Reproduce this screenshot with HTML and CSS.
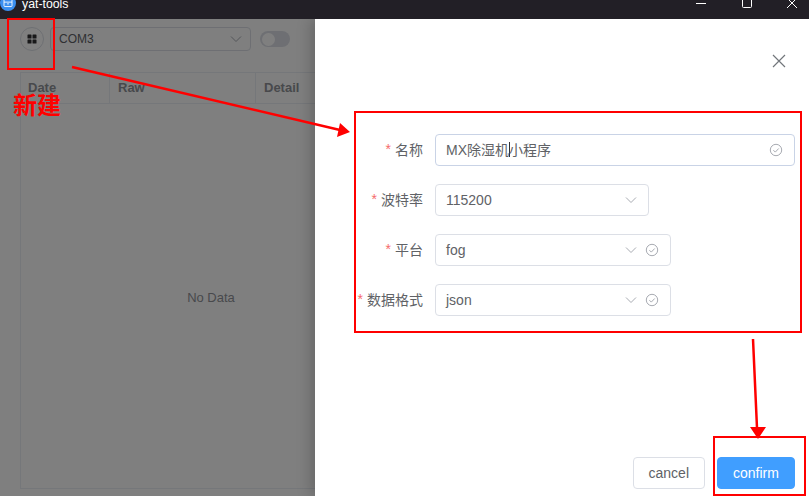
FILE: index.html
```html
<!DOCTYPE html>
<html lang="en">
<head>
    <meta charset="UTF-8">
    <meta name="viewport" content="width=device-width, initial-scale=1.0">
    <title>yat-tools</title>
    <link rel="stylesheet" href="styles.css">
</head>
<body>
    <!-- Title bar -->
    <header class="titlebar">
        <svg class="app-logo" width="16" height="16" viewBox="0 0 18 18">
            <circle cx="9" cy="9" r="9" fill="#3b8ff0"/>
            <rect x="4.5" y="4" width="9" height="9" rx="1" fill="none" stroke="#fff"/>
            <path d="M4.5 8h9M8 10h2" stroke="#fff"/>
        </svg>
        <span class="app-title">yat-tools</span>
        <div class="window-controls">
            <svg width="12" height="12" viewBox="0 0 12 12"><path d="M1 6.5h10" stroke="#fff"/></svg>
            <svg width="12" height="12" viewBox="0 0 12 12"><rect x="1.5" y="1.5" width="9" height="9" rx="1" fill="none" stroke="#fff"/></svg>
            <svg width="12" height="12" viewBox="0 0 12 12"><path d="M1 1l10 10M11 1L1 11" stroke="#fff"/></svg>
        </div>
    </header>

    <div class="workspace">
        <!-- App content behind the drawer -->
        <main class="app">
            <div class="toolbar">
                <button class="icon-button">
                    <svg width="10" height="10" viewBox="0 0 10 10" fill="#303133">
                        <rect x="0.5" y="0.5" width="4" height="4" rx="0.6"/>
                        <rect x="5.5" y="0.5" width="4" height="4" rx="0.6"/>
                        <rect x="0.5" y="5.5" width="4" height="4" rx="0.6"/>
                        <rect x="5.5" y="5.5" width="4" height="4" rx="0.6"/>
                    </svg>
                </button>
                <div class="port-select">
                    <span>COM3</span>
                    <svg class="chevron" width="12" height="12" viewBox="0 0 12 12"><path d="M1 3.5l5 5 5-5" fill="none" stroke="#a8abb2"/></svg>
                </div>
                <div class="switch"><span class="switch-knob"></span></div>
            </div>
            <div class="data-table">
                <div class="table-head">
                    <div>Date</div>
                    <div>Raw</div>
                    <div>Detail</div>
                </div>
                <div class="table-empty">No Data</div>
            </div>
        </main>

        <div class="mask"></div>

        <!-- New item drawer -->
        <aside class="drawer">
            <div class="drawer-header">
                <svg width="14" height="14" viewBox="0 0 14 14"><path d="M1 1l12 12M13 1L1 13" stroke="#72767b" stroke-width="1.2"/></svg>
            </div>
            <form class="form">
                <div class="form-row">
                    <label class="form-label">名称</label>
                    <div class="field field-full field-active">
                        <span class="field-value field-value-cjk">MX除湿机<i class="caret"></i>小程序</span>
                        <svg class="check" width="14" height="14" viewBox="0 0 14 14"><circle cx="7" cy="7" r="5.7" fill="none" stroke="#a8abb2"/><path d="M4.4 7.2l1.9 1.9 3.4-3.6" fill="none" stroke="#a8abb2"/></svg>
                    </div>
                </div>
                <div class="form-row">
                    <label class="form-label">波特率</label>
                    <div class="field field-short">
                        <span class="field-value">115200</span>
                        <svg class="chevron" width="12" height="12" viewBox="0 0 12 12"><path d="M1 3.5l5 5 5-5" fill="none" stroke="#a8abb2"/></svg>
                    </div>
                </div>
                <div class="form-row">
                    <label class="form-label">平台</label>
                    <div class="field field-mid">
                        <span class="field-value">fog</span>
                        <svg class="chevron" width="12" height="12" viewBox="0 0 12 12"><path d="M1 3.5l5 5 5-5" fill="none" stroke="#a8abb2"/></svg>
                        <svg class="check" width="14" height="14" viewBox="0 0 14 14"><circle cx="7" cy="7" r="5.7" fill="none" stroke="#a8abb2"/><path d="M4.4 7.2l1.9 1.9 3.4-3.6" fill="none" stroke="#a8abb2"/></svg>
                    </div>
                </div>
                <div class="form-row">
                    <label class="form-label">数据格式</label>
                    <div class="field field-mid">
                        <span class="field-value">json</span>
                        <svg class="chevron" width="12" height="12" viewBox="0 0 12 12"><path d="M1 3.5l5 5 5-5" fill="none" stroke="#a8abb2"/></svg>
                        <svg class="check" width="14" height="14" viewBox="0 0 14 14"><circle cx="7" cy="7" r="5.7" fill="none" stroke="#a8abb2"/><path d="M4.4 7.2l1.9 1.9 3.4-3.6" fill="none" stroke="#a8abb2"/></svg>
                    </div>
                </div>
            </form>
            <div class="drawer-footer">
                <button class="btn">cancel</button>
                <button class="btn btn-primary">confirm</button>
            </div>
        </aside>
    </div>

    <!-- Red screenshot annotations -->
    <svg class="annotations" width="809" height="496" viewBox="0 0 809 496">
        <g fill="none" stroke="#f00" stroke-width="2">
            <rect x="8" y="19" width="46" height="50"/>
            <rect x="355" y="112" width="446" height="220"/>
            <rect x="714" y="437" width="91" height="58"/>
            <path d="M72 67L340 130M753 339L757 428" stroke-width="2.5"/>
        </g>
        <path d="M350 132L340 123L337 137ZM758 439L750 427L766 427Z" fill="#f00"/>
    </svg>
    <div class="annotation-label">新建</div>
</body>
</html>
```

FILE: styles.css
```css
/* General Styles */
* {
    box-sizing: border-box;
}

html, body {
    height: 100%;
}

body {
    margin: 0;
    display: flex;
    flex-direction: column;
    overflow: hidden;
    position: relative;
    font-family: "Liberation Sans", "Noto Sans CJK SC", sans-serif;
    font-size: 14px;
    color: #606266;
    background: #fff;
}

/* Title bar, cut off at the top of the screenshot */
.titlebar {
    height: 19px;
    flex-shrink: 0;
    display: flex;
    align-items: flex-start;
    overflow: hidden;
    background: #221f26;
    color: #fff;
    position: relative;
}

.app-logo {
    margin: -5px 0 0 0;
    flex-shrink: 0;
}

.app-title {
    margin-left: 6px;
    margin-top: -3px;
    font-size: 12.3px;
    line-height: 14px;
}

.window-controls {
    margin-left: auto;
    display: flex;
    gap: 33.5px;
    padding-right: 11px;
    margin-top: -3px;
}

/* App behind the drawer */
.workspace {
    flex: 1;
    position: relative;
    overflow: hidden;
}

.app {
    height: 100%;
    padding: 8px 0 0 20px;
}

.toolbar {
    display: flex;
    align-items: center;
    height: 24px;
}

.icon-button {
    width: 24px;
    height: 24px;
    padding: 0;
    display: flex;
    align-items: center;
    justify-content: center;
    border: 1px solid #dcdfe6;
    border-radius: 50%;
    background: #fff;
}

.port-select {
    width: 201px;
    height: 24px;
    margin-left: 6px;
    padding: 0 8px;
    display: flex;
    align-items: center;
    justify-content: space-between;
    border: 1px solid #dcdfe6;
    border-radius: 4px;
    font-size: 12px;
}

.switch {
    width: 30px;
    height: 16px;
    margin-left: 9px;
    padding: 1.5px;
    border-radius: 8px;
    background: #dcdfe6;
}

.switch-knob {
    display: block;
    width: 13px;
    height: 13px;
    border-radius: 50%;
    background: #fff;
}

/* Table */
.data-table {
    width: 382px;
    height: 417px;
    margin-top: 21px;
    display: flex;
    flex-direction: column;
    border: 1px solid #ebeef5;
}

.table-head {
    height: 31px;
    flex-shrink: 0;
    display: grid;
    grid-template-columns: 89px 146px 1fr;
    border-bottom: 1px solid #ebeef5;
    font-size: 13px;
    font-weight: bold;
    color: #909399;
}

.table-head div {
    display: flex;
    align-items: center;
    padding: 0 0 2px 8px;
    border-right: 1px solid #ebeef5;
}

.table-head div:first-child {
    padding-left: 7px;
}

.table-empty {
    flex: 1;
    display: flex;
    align-items: center;
    justify-content: center;
    padding-top: 3px;
    font-size: 13px;
    color: #909399;
}

.mask {
    position: absolute;
    inset: 0;
    background: rgba(0, 0, 0, 0.5);
}

/* Drawer */
.drawer {
    position: absolute;
    top: 0;
    right: 0;
    bottom: 0;
    width: 494px;
    display: flex;
    flex-direction: column;
    background: #fff;
    box-shadow: -4px 0 14px rgba(0, 0, 0, 0.2);
}

.drawer-header {
    height: 115px;
    flex-shrink: 0;
    display: flex;
    justify-content: flex-end;
    padding: 35px 23px 0 0;
}

.form {
    padding-left: 40px;
    padding-right: 14px;
}

.form-row {
    display: flex;
    height: 32px;
    margin-bottom: 18px;
}

.form-label {
    width: 80px;
    flex-shrink: 0;
    padding: 0 12px 2px 0;
    display: flex;
    align-items: center;
    justify-content: flex-end;
}

.form-label::before {
    content: "*";
    margin-right: 4px;
    color: #f56c6c;
}

.field {
    height: 32px;
    padding: 0 11px 0 10px;
    display: flex;
    align-items: center;
    border: 1px solid #dcdfe6;
    border-radius: 4px;
}

.field-active {
    border-color: #c9d3e6;
}

.field-full {
    flex: 1;
}

.field-short {
    width: 214px;
}

.field-mid {
    width: 236px;
}

.field-value {
    flex: 1;
    white-space: nowrap;
}

.field-value-cjk {
    padding-bottom: 2px;
}

.caret {
    display: inline-block;
    width: 1px;
    height: 15px;
    margin-right: -1px;
    vertical-align: -2px;
    background: #303133;
}

.check {
    margin-left: 8px;
    flex-shrink: 0;
}

.drawer-footer {
    margin-top: auto;
    display: flex;
    justify-content: flex-end;
    gap: 12px;
    padding: 0 14px 7px 0;
}

.btn {
    height: 32px;
    padding: 0 15px;
    border: 1px solid #dcdfe6;
    border-radius: 4px;
    background: #fff;
    color: #606266;
    font-family: inherit;
    font-size: 14px;
}

.btn-primary {
    width: 78px;
    border-color: #409eff;
    background: #409eff;
    color: #fff;
}

/* Annotations painted over the screenshot */
.annotations {
    position: absolute;
    top: 0;
    left: 0;
}

.annotation-label {
    position: absolute;
    left: 13px;
    top: 92px;
    font-size: 24px;
    line-height: 28px;
    font-weight: bold;
    color: #f00;
}
```
